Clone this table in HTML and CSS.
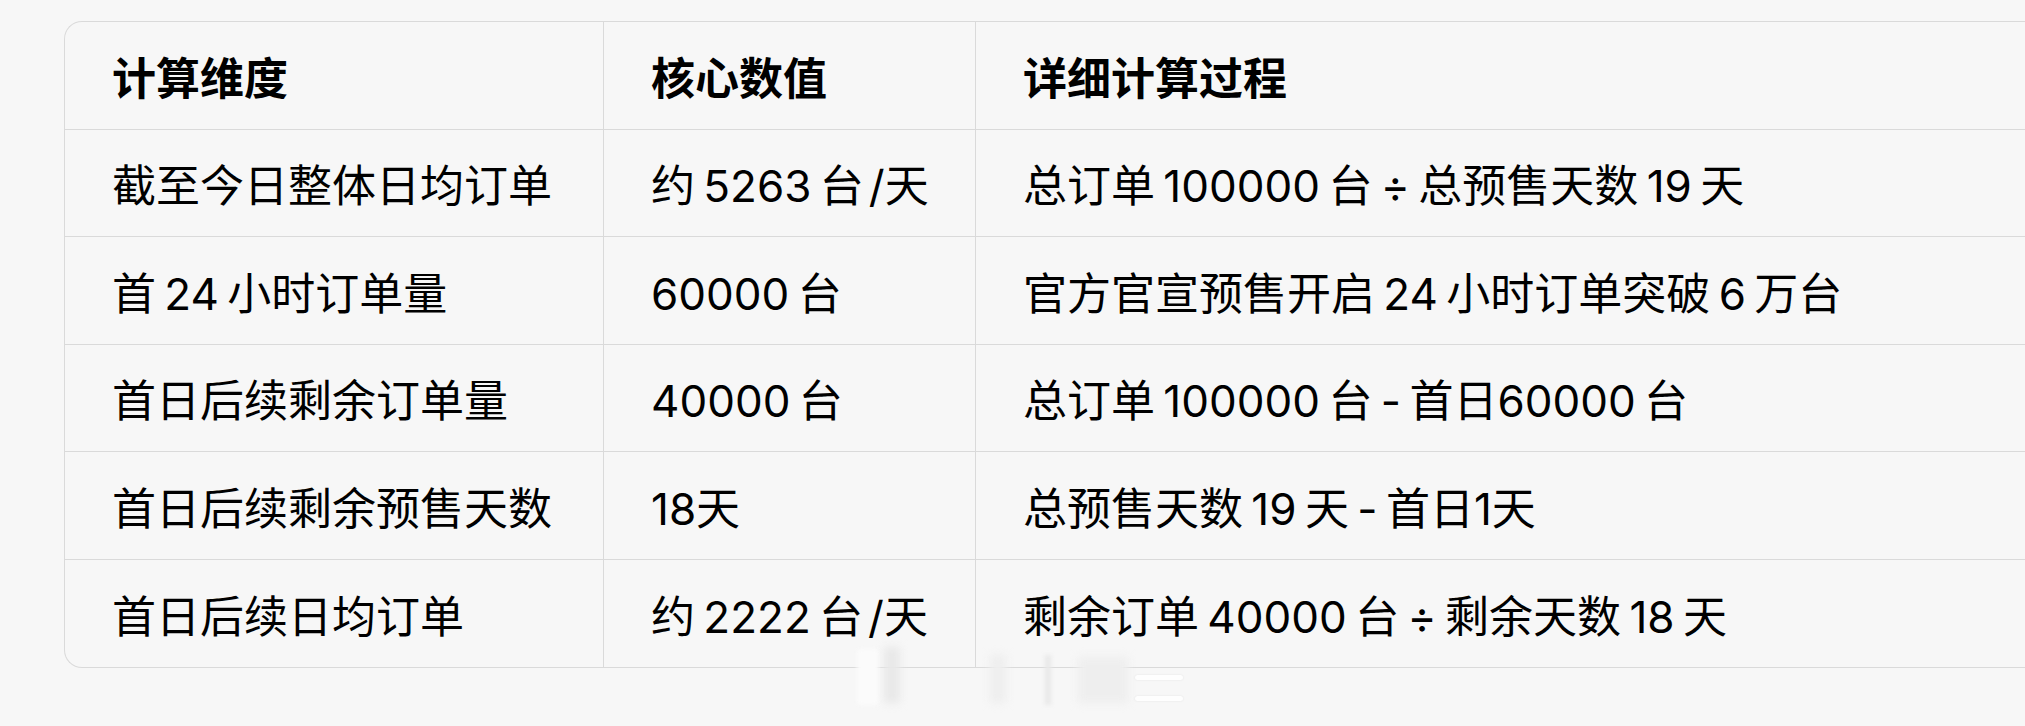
FILE: index.html
```html
<!DOCTYPE html>
<html lang="zh-CN">
<head>
<meta charset="utf-8">
<title>计算表</title>
<link rel="stylesheet" href="styles.css">
</head>
<body>
<div class="page">
  <div class="table">
    <div class="cell head">计算维度</div>
    <div class="cell head">核心数值</div>
    <div class="cell head last-col">详细计算过程</div>

    <div class="cell">截至今日整体日均订单</div>
    <div class="cell">约 5263 台<span class="tight">/天</span></div>
    <div class="cell last-col">总订单 100000 台 ÷ 总预售天数 19 天</div>

    <div class="cell">首 24 小时订单量</div>
    <div class="cell">60000 台</div>
    <div class="cell last-col">官方官宣预售开启 24 小时订单突破 6 万台</div>

    <div class="cell">首日后续剩余订单量</div>
    <div class="cell">40000 台</div>
    <div class="cell last-col">总订单 100000 台 - 首日60000 台</div>

    <div class="cell">首日后续剩余预售天数</div>
    <div class="cell">18天</div>
    <div class="cell last-col">总预售天数 19 天 - 首日1天</div>

    <div class="cell last-row">首日后续日均订单</div>
    <div class="cell last-row">约 2222 台<span class="tight">/天</span></div>
    <div class="cell last-row last-col">剩余订单 40000 台 ÷ 剩余天数 18 天</div>
  </div>
  <div class="watermark" aria-hidden="true">
    <span class="wm wm-a"></span>
    <span class="wm wm-b"></span>
    <span class="wm wm-c"></span>
    <span class="wm wm-d"></span>
    <span class="wm wm-e"></span>
    <span class="wm wm-f"></span>
    <span class="wm wm-g"></span>
  </div>
</div>
</body>
</html>
```

FILE: styles.css
```css
html, body {
  margin: 0;
  padding: 0;
  background: #f7f7f7;
  overflow: hidden;
}

.page {
  position: relative;
  width: 2025px;
  height: 726px;
  padding: 21px 0 0 64px;
  box-sizing: border-box;
}

.table {
  width: 1961px;
  display: grid;
  grid-template-columns: 539px 372px 1fr;
  grid-auto-rows: 107.5px;
  border-top: 1.5px solid #dadada;
  border-left: 1.5px solid #dadada;
  border-bottom: 1.5px solid #dadada;
  border-radius: 18px 0 0 18px;
  box-sizing: border-box;
  font-family: "Inter", "Noto Sans CJK SC", sans-serif;
  font-size: 44px;
  color: #000;
  word-spacing: -4px;
}

.cell {
  display: flex;
  align-items: center;
  padding: 1px 0 0 47px;
  border-right: 1.5px solid #dadada;
  border-bottom: 1.5px solid #dadada;
  box-sizing: border-box;
  white-space: nowrap;
  overflow: hidden;
}

.tight {
  margin-left: 5px;
}

.cell.last-col {
  border-right: none;
}

.cell.last-row {
  border-bottom: none;
}

.head {
  font-weight: 700;
}

.watermark {
  position: absolute;
  left: 840px;
  top: 645px;
  width: 345px;
  height: 62px;
}

.wm {
  position: absolute;
  display: block;
}

.wm-a {
  left: 17px;
  top: 4px;
  width: 22px;
  height: 56px;
  background: #fbfbfb;
  filter: blur(2px);
  border-radius: 3px;
}

.wm-b {
  left: 44px;
  top: 2px;
  width: 16px;
  height: 56px;
  background: #e8e8e8;
  filter: blur(4px);
}

.wm-c {
  left: 150px;
  top: 10px;
  width: 16px;
  height: 48px;
  background: #eeeeee;
  filter: blur(4px);
}

.wm-d {
  left: 205px;
  top: 10px;
  width: 6px;
  height: 50px;
  background: #e8e8e8;
  filter: blur(2px);
}

.wm-e {
  left: 238px;
  top: 12px;
  width: 50px;
  height: 46px;
  background: #eeeeee;
  filter: blur(4px);
}

.wm-f {
  left: 295px;
  top: 30px;
  width: 48px;
  height: 5px;
  background: #fefefe;
  border-radius: 3px;
  box-shadow: 0 0 2px #e0e0e0;
}

.wm-g {
  left: 295px;
  top: 51px;
  width: 48px;
  height: 5px;
  background: #fefefe;
  border-radius: 3px;
  box-shadow: 0 0 2px #e0e0e0;
}
```
